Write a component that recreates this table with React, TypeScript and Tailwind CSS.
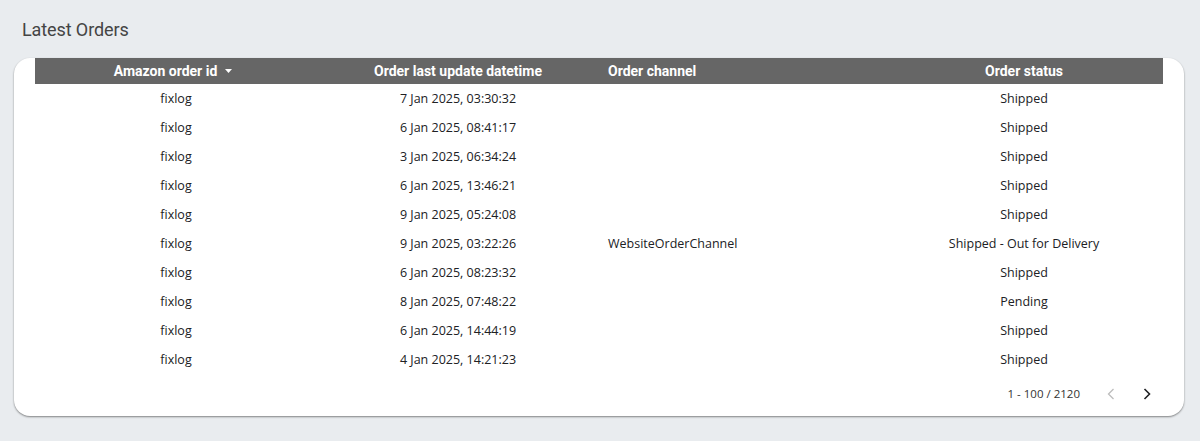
const rows = [
  { id: "fixlog", date: "7 Jan 2025, 03:30:32", channel: "", status: "Shipped" },
  { id: "fixlog", date: "6 Jan 2025, 08:41:17", channel: "", status: "Shipped" },
  { id: "fixlog", date: "3 Jan 2025, 06:34:24", channel: "", status: "Shipped" },
  { id: "fixlog", date: "6 Jan 2025, 13:46:21", channel: "", status: "Shipped" },
  { id: "fixlog", date: "9 Jan 2025, 05:24:08", channel: "", status: "Shipped" },
  {
    id: "fixlog",
    date: "9 Jan 2025, 03:22:26",
    channel: "WebsiteOrderChannel",
    status: "Shipped - Out for Delivery",
  },
  { id: "fixlog", date: "6 Jan 2025, 08:23:32", channel: "", status: "Shipped" },
  { id: "fixlog", date: "8 Jan 2025, 07:48:22", channel: "", status: "Pending" },
  { id: "fixlog", date: "6 Jan 2025, 14:44:19", channel: "", status: "Shipped" },
  { id: "fixlog", date: "4 Jan 2025, 14:21:23", channel: "", status: "Shipped" },
];

const cols = "grid grid-cols-[282px_282px_286px_278px]";

export default function App() {
  return (
    <div className="w-[1200px] h-[441px] bg-[#e9ecef] px-[14px] pt-[17px]">
      <h2 className="pl-[8px] text-[18px] leading-[26px] text-[#444] font-['Roboto',sans-serif] tracking-[-0.1px]">
        Latest Orders
      </h2>
      <div className="mt-[15px] w-[1170px] bg-white rounded-2xl shadow-[0_1px_2px_rgba(0,0,0,0.45)] px-[21px] h-[358px]">
        <div
          className={`${cols} h-[26px] items-center bg-[#666666] text-white text-[14px] font-bold font-['Roboto',sans-serif]`}
        >
          <div className="flex items-center justify-center gap-[8px] pr-[6px]">
            Amazon order id
            <svg width="7" height="4" viewBox="0 0 7 4" className="mt-[-1px]">
              <path d="M0 0h7L3.5 4z" fill="white" />
            </svg>
          </div>
          <div className="text-center">Order last update datetime</div>
          <div className="pl-[9px]">Order channel</div>
          <div className="text-center">Order status</div>
        </div>
        <div className="pt-[1px] font-['Open_Sans',sans-serif] text-[12.5px] text-[#202124]">
          {rows.map((r, i) => (
            <div key={i} className={`${cols} h-[29px] items-center`}>
              <div className="text-center">{r.id}</div>
              <div className="text-center">{r.date}</div>
              <div className="pl-[9px]">{r.channel}</div>
              <div className="text-center">{r.status}</div>
            </div>
          ))}
        </div>
        <div className="flex items-center justify-end h-[37px] font-['Open_Sans',sans-serif] text-[11.5px] text-[#333]">
          <span>1 - 100 / 2120</span>
          <svg width="8" height="12" viewBox="0 0 8 12" className="ml-[27px]">
            <path d="M6.5 1 1.5 6l5 5" stroke="#bdbdbd" strokeWidth="1.3" fill="none" />
          </svg>
          <svg width="8" height="12" viewBox="0 0 8 12" className="ml-[28px] mr-[12px]">
            <path d="M1.5 1 6.5 6l-5 5" stroke="#202124" strokeWidth="1.6" fill="none" />
          </svg>
        </div>
      </div>
    </div>
  );
}
